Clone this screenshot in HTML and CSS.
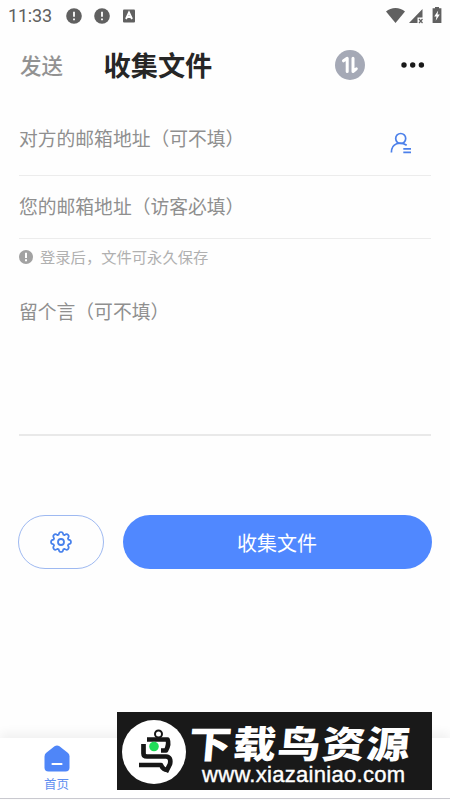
FILE: index.html
```html
<!DOCTYPE html>
<html lang="zh-CN">
<head>
<meta charset="utf-8">
<title>收集文件</title>
<link rel="stylesheet" href="styles.css">
</head>
<body>
<div class="app">
  <div class="status">
    <span class="clock">11:33</span>
    <svg class="alert" viewBox="0 0 16 16"><circle cx="8" cy="8" r="7.8" fill="#606060"/><path d="M8 3.8v5M8 10.4v1.8" stroke="#fff" stroke-width="1.8"/></svg>
    <svg class="alert" viewBox="0 0 16 16"><circle cx="8" cy="8" r="7.8" fill="#606060"/><path d="M8 3.8v5M8 10.4v1.8" stroke="#fff" stroke-width="1.8"/></svg>
    <svg class="badge" viewBox="0 0 12 14"><rect y=".5" width="12" height="13" rx="1" fill="#606060"/><path d="M3 10 6 3.500 9 10M4.300 8h3.400" fill="none" stroke="#fff" stroke-width="1.900"/></svg>
    <svg class="signals" viewBox="0 0 58 18"><path d="M1 4.5C6-.3 15-.3 20 4.5L10.5 16Z" fill="#606060"/><path d="M37.5 2v8.5h-5v5.5h-8.5Z" fill="#606060"/><path d="m34 12 3.5 4M37.5 12 34 16" stroke="#606060" stroke-width="1.2"/><path d="M50 0h4v1.3h2.4V16H47.600V1.300H50Z" fill="#606060"/><path d="m53.200 3.500-4 6h2.300l-.8 4.300 4.100-6.200h-2.300Z" fill="#fff"/></svg>
  </div>
  <header class="header">
    <span class="tab">发送</span>
    <h1 class="title">收集文件</h1>
    <svg class="transfer" viewBox="0 0 30 30"><circle cx="15" cy="15" r="15" fill="#a5a9b6"/><path d="M8.500 10.800 12.200 8.300V21.500M18 8.300V21.500L21.300 18.800" fill="none" stroke="#fff" stroke-width="3" stroke-linecap="round" stroke-linejoin="round"/></svg>
    <svg class="more" viewBox="0 0 24 6"><g fill="#191919"><circle cx="3" cy="3" r="2.700"/><circle cx="11.700" cy="3" r="2.700"/><circle cx="20.400" cy="3" r="2.700"/></g></svg>
  </header>
  <main class="form">
    <div class="field recipient">
      <span>对方的邮箱地址（可不填）</span>
      <svg class="contact" viewBox="0 0 22 22"><g fill="none" stroke="#4c80ea" stroke-width="1.700"><circle cx="10.700" cy="6.500" r="5"/><path d="M1.400 20.500C1.400 10.800 10.200 9.300 16.700 13.200"/><path d="M13.300 16.800h7.700M13.300 20.300h7.700"/></g></svg>
    </div>
    <div class="field sender">您的邮箱地址（访客必填）</div>
    <div class="hint"><svg class="hint-icon" viewBox="0 0 14 14"><circle cx="7" cy="7" r="7" fill="#a2a2a2"/><path d="M7 2.700v5.200M7 9.300v2" stroke="#fff" stroke-width="2"/></svg><span>登录后，文件可永久保存</span></div>
    <div class="field message">留个言（可不填）</div>
    <div class="actions">
      <div class="settings"><svg class="gear" viewBox="0 0 22 22"><path d="M8.700 3.600Q9 1 11 1T13.300 3.600L14.600 4.100Q16.700 2.500 18.100 3.900T17.900 7.400L18.400 8.700Q21 9 21 11T18.400 13.300L17.900 14.600Q19.500 16.700 18.100 18.100T14.600 17.900L13.300 18.400Q13 21 11 21T8.700 18.400L7.400 17.900Q5.300 19.500 3.900 18.100T4.100 14.600L3.600 13.300Q1 13 1 11T3.600 8.700L4.100 7.400Q2.500 5.300 3.900 3.900T7.400 4.100Z" fill="none" stroke="#4781ec" stroke-width="1.700" stroke-linejoin="round"/><circle cx="11" cy="11" r="3" fill="none" stroke="#4781ec" stroke-width="1.800"/></svg></div>
      <div class="submit">收集文件</div>
    </div>
  </main>
  <nav class="bottom">
    <div class="home">
      <svg class="home-icon" viewBox="0 0 26 27"><path d="M10.500 1.300Q13 -.5 15.500 1.300L24 8Q25.500 9.200 25.500 11.500V22.500Q25.500 26.500 21.500 26.500H4.500Q.5 26.500 .5 22.500V11.500Q.5 9.200 2 8Z" fill="#4f86f8"/><path d="M8.500 19h9" stroke="#fff" stroke-width="2.200" stroke-linecap="round"/></svg>
      <span>首页</span>
    </div>
  </nav>
  <div class="watermark">
    <svg class="bird" viewBox="0 0 64 64"><circle cx="32" cy="32" r="32" fill="#fff"/><g fill="none" stroke="#171717" stroke-width="4.700" stroke-linejoin="round"><circle cx="36.500" cy="14" r="3.500" stroke-width="2"/><path d="M25 19.500H45.500Q47.500 24 44 30.500H39"/><path d="M21.500 24V33.500Q21.500 36.500 25 36.500H44Q49.500 37 48 44L44 52"/><path d="M17 45H39Q41 50 46 50"/></g><circle cx="32" cy="26.500" r="4.800" fill="#20dc58"/></svg>
    <div class="brand"><span class="brand-name">下载鸟资源</span><span class="brand-url">www.xiazainiao.com</span></div>
  </div>
</div>
</body>
</html>
```
FILE: styles.css
```css
* { box-sizing: border-box; }
body { margin: 0; background: #fff; font-family: "Noto Sans CJK SC", sans-serif; }
svg { display: block; flex: none; }
.app { position: relative; display: flex; flex-direction: column; width: 450px; height: 800px; overflow: hidden; background: #fefefe; }
.status { display: flex; align-items: center; height: 31px; padding: 0 7px 0 8px; color: #606060; }
.clock { width: 58px; font: 18px/31px Roboto, sans-serif; letter-spacing: -.2px; }
.alert { width: 16px; height: 16px; margin-right: 12px; }
.badge { width: 12px; height: 14px; margin-left: 1px; }
.signals { width: 58px; height: 18px; margin-left: auto; }
.header { display: flex; align-items: center; height: 68px; padding: 0 25px 0 20px; }
.tab { width: 83.500px; padding-bottom: 2px; font-size: 21.500px; font-weight: 500; color: #929292; }
.title { margin: 0; padding-bottom: 2px; font-size: 27.200px; line-height: 40px; font-weight: 700; color: #262626; }
.transfer { width: 30px; height: 30px; margin-left: auto; }
.more { width: 24px; height: 6px; margin-left: 36px; }
.form { padding: 0 19px; }
.field { font-size: 18.800px; line-height: 28px; color: #8f8f8f; white-space: nowrap; }
.recipient { display: flex; justify-content: space-between; height: 77px; padding: 25px 19px 0 0; border-bottom: 1px solid #ececec; }
.contact { width: 22px; height: 22px; margin-top: 8px; }
.sender { height: 63px; padding-top: 16px; border-bottom: 1px solid #ececec; }
.hint { display: flex; align-items: center; gap: 7px; height: 36px; font-size: 15.300px; color: #b0b0b0; }
.hint span { padding-bottom: 2px; }
.hint-icon { width: 14px; height: 14px; }
.message { height: 161px; padding-top: 22px; border-bottom: 2px solid #e9e9e9; }
.actions { display: flex; gap: 18.500px; height: 54px; margin: 79px -.5px 0 0; }
.settings { display: flex; align-items: center; justify-content: center; width: 86px; margin-left: -1px; border: 1px solid #9eb9f1; border-radius: 27px; }
.gear { width: 22px; height: 22px; }
.submit { flex: 1; border-radius: 27px; background: #5088ff; color: #fff; font-size: 20px; line-height: 55px; text-align: center; }
.bottom { height: 61px; margin-top: auto; padding: 7px 0 0 30px; border-bottom: 1px solid #c9c9cf; margin-bottom: 1px; background: #fff; box-shadow: 0 -5px 10px rgba(0, 0, 0, .055); }
.home { display: flex; flex-direction: column; align-items: center; width: 53px; font-size: 12.500px; line-height: 18px; color: #5f8ff0; }
.home-icon { width: 26px; height: 27px; margin-bottom: 3px; }
.watermark { position: absolute; left: 117px; top: 712px; display: flex; width: 315px; height: 78px; padding: 8px 5px; background: #191919; }
.bird { width: 64px; height: 64px; }
.brand { display: flex; flex-direction: column; margin-left: 3px; color: #fff; white-space: nowrap; }
.brand-name { font-size: 43px; line-height: 36px; height: 40px; padding-top: 4px; font-weight: 900; letter-spacing: 1.500px; transform: skewX(-5deg) scaleY(.87); }
.brand-url { margin-left: 13px; font: 22px/30px "Liberation Sans", sans-serif; -webkit-text-stroke: .4px #fff; letter-spacing: .3px; }
```
